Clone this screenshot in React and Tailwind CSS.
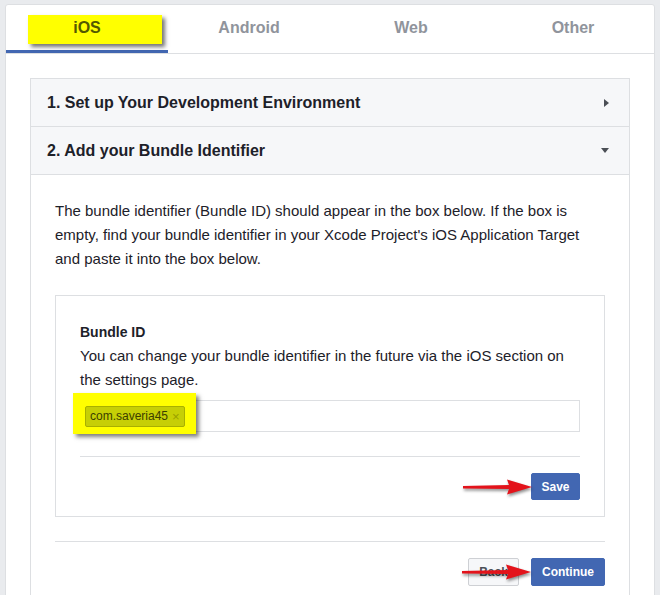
import React from "react";

const font = { fontFamily: '"Liberation Sans", Arial, Helvetica, sans-serif' };

function RedArrow({ className }) {
  return (
    <svg
      className={className}
      width="72"
      height="22"
      viewBox="0 0 72 22"
      style={{ filter: "drop-shadow(1px 2px 1.5px rgba(0,0,0,0.45))" }}
    >
      <path d="M1 10 L47 9 L45 3.5 L70 11 L45 18.5 L47 13 L1 12.5 Z" fill="#e3131b" />
    </svg>
  );
}

function Tab({ label, active }) {
  if (active) {
    return (
      <div className="relative flex items-center justify-center border-b-[3px] border-[#4267b2]">
        {/* highlighter annotation */}
        <div className="absolute left-[22px] top-[10px] h-[29px] w-[134px] bg-[#ffff00] shadow-[3px_3px_4px_rgba(0,0,0,0.55)]" />
        <span className="relative text-[16px] font-bold text-[#535800]">{label}</span>
      </div>
    );
  }
  return (
    <div className="flex items-center justify-center pb-[3px]">
      <span className="text-[16px] font-bold text-[#90949c]">{label}</span>
    </div>
  );
}

function AccordionHeader({ title, open }) {
  return (
    <div className="flex h-[48px] items-center justify-between border-b border-[#dddfe2] bg-[#f6f7f9] pl-[16px] pr-[20px]">
      <span className="text-[16px] font-bold text-[#1d2129]">{title}</span>
      {open ? (
        <span className="h-0 w-0 border-l-[4px] border-r-[4px] border-t-[5px] border-l-transparent border-r-transparent border-t-[#4b4f56]" />
      ) : (
        <span className="h-0 w-0 border-b-[4px] border-l-[5px] border-t-[4px] border-b-transparent border-l-[#4b4f56] border-t-transparent" />
      )}
    </div>
  );
}

export default function App() {
  return (
    <div style={font} className="h-[595px] w-[660px] overflow-hidden bg-[#e9ebee] px-[5px] pt-[4px]">
      <div className="h-[620px] rounded-t-[3px] border border-[#dddfe2] bg-white">
        {/* Tabs */}
        <div className="grid h-[49px] grid-cols-4 border-b border-[#dddfe2]">
          <Tab label="iOS" active />
          <Tab label="Android" />
          <Tab label="Web" />
          <Tab label="Other" />
        </div>

        <div className="px-[24px] pt-[24px]">
          <div className="border border-[#dddfe2]">
            <AccordionHeader title="1. Set up Your Development Environment" />
            <AccordionHeader title="2. Add your Bundle Identifier" open />

            <div className="px-[24px] pt-[24px] pb-[40px] text-[15px] leading-[24px] text-[#1d2129]">
              <p>
                The bundle identifier (Bundle ID) should appear in the box below. If the box is
                empty, find your bundle identifier in your Xcode Project's iOS Application Target
                and paste it into the box below.
              </p>

              <div className="mt-[24px] border border-[#dddfe2] px-[24px] pt-[24px] pb-[16px]">
                <div className="text-[14px] font-bold">Bundle ID</div>
                <p>
                  You can change your bundle identifier in the future via the iOS section on the
                  settings page.
                </p>

                <div className="relative mt-[8px] flex h-[32px] items-center border border-[#dddfe2] px-[4px]">
                  <div className="absolute left-[-8px] top-[-8px] h-[41px] w-[123px] bg-[#ffff00] shadow-[3px_3px_4px_rgba(0,0,0,0.5)]" />
                  <div className="relative flex h-[21px] items-center gap-[4px] rounded-[2px] border border-[#a8b000] bg-[#c6cf06] px-[4px] text-[12px] leading-none text-[#3b3e00]">
                    <span>com.saveria45</span>
                    <span className="text-[13px] text-[#9aa000]">×</span>
                  </div>
                </div>

                <div className="mt-[24px] flex justify-end border-t border-[#dddfe2] pt-[16px]">
                  <div className="relative">
                    <RedArrow className="absolute left-[-69px] top-[3px]" />
                    <button className="h-[27px] w-[49px] rounded-[2px] border border-[#4267b2] bg-[#4267b2] text-[12px] font-bold text-white">
                      Save
                    </button>
                  </div>
                </div>
              </div>

              <div className="mt-[24px] flex justify-end gap-[12px] border-t border-[#dddfe2] pt-[16px]">
                <button className="h-[28px] w-[51px] rounded-[2px] border border-[#ced0d4] bg-[#f6f7f9] text-[12px] font-bold text-[#4b4f56]">
                  Back
                </button>
                <div className="relative">
                  <RedArrow className="absolute left-[-70px] top-[3px]" />
                  <button className="h-[28px] w-[74px] rounded-[2px] border border-[#4267b2] bg-[#4267b2] text-[12px] font-bold text-white">
                    Continue
                  </button>
                </div>
              </div>
            </div>
          </div>
        </div>
      </div>
    </div>
  );
}
